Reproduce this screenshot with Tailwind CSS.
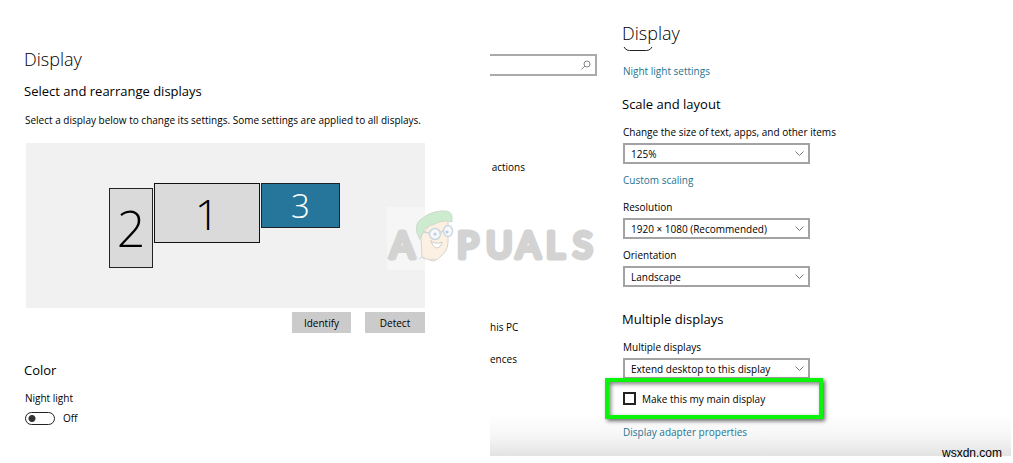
<!DOCTYPE html>
<html lang="en">
<head>
  <meta charset="UTF-8" />
  <meta name="viewport" content="width=device-width, initial-scale=1.0"/>
  <title>Display settings</title>
  <script src="https://cdn.jsdelivr.net/npm/@tailwindcss/browser@4"></script>
</head>
<body class="relative min-h-screen bg-white text-black text-[10px] leading-4 font-['Open_Sans','Noto_Sans',sans-serif]">

  <div class="grid grid-cols-[490fr_523fr]">

    <!-- Left: arrangement -->
    <main class="relative pl-6 pt-[45px]">
      <h1 class="text-[18px] leading-7 font-light">Display</h1>
      <h2 class="mt-2 text-[13px] leading-5">Select and rearrange displays</h2>
      <p class="mt-[11px] pl-px">Select a display below to change its settings. Some settings are applied to all displays.</p>

      <div class="ml-0.5 w-[399px]">
        <!-- Monitors -->
        <div class="relative mt-[15px] h-[165px] bg-[#f1f1f1] font-light">
          <button type="button" class="absolute left-[83px] top-[45px] w-11 h-20 border border-[#222] bg-[#dadada] text-[50px] leading-none">2</button>
          <button type="button" class="absolute left-32 top-10 w-[106px] h-[60px] border border-[#111] bg-[#dadada] text-[43px] leading-none">1</button>
          <button type="button" class="absolute left-[235px] top-10 w-[79px] h-[45px] border border-[#1b2328] bg-[#26769c] text-white text-[33px] leading-none">3</button>
        </div>

        <div class="mt-1 flex justify-end gap-[14px]">
          <button type="button" class="w-[59px] h-[21px] bg-[#cbcbcb]">Identify</button>
          <button type="button" class="w-[60px] h-[21px] bg-[#cbcbcb]">Detect</button>
        </div>
      </div>

      <h2 class="mt-[27px] text-[13px] leading-5">Color</h2>
      <label for="night" class="block mt-[10px] pl-px">Night light</label>
      <div class="mt-1 pl-px flex items-center gap-2">
        <input id="night" type="checkbox" role="switch"
               class="appearance-none w-[30px] h-[13px] rounded-full border border-[#222] bg-[radial-gradient(circle_at_6px_50%,#333_3px,transparent_4px)]" />
        <span>Off</span>
      </div>
    </main>

    <!-- Right: settings window -->
    <section class="mr-0.5 flex bg-[linear-gradient(to_top,#e3e3e3,#f6f6f6_20px,#fff_42px)]">

      <!-- Cropped sidebar -->
      <nav class="w-[107px] mr-[26px] pt-[54px] shrink-0">
        <div class="relative">
          <input type="text" aria-label="Find a setting" class="block w-full h-[22px] border-2 border-l-0 border-[#aaa] bg-white px-2" />
          <svg class="absolute right-1 top-1.5 w-3 h-3" viewBox="0 0 12 12" fill="none" stroke="#888" stroke-width="1">
            <circle cx="6" cy="4" r="3"/>
            <path d="M4 6 L0.500 9.500"/>
          </svg>
        </div>
        <a href="#" class="block mt-[83px] w-[35px] text-right">actions</a>
        <a href="#" class="block mt-36">his PC</a>
        <a href="#" class="block mt-4">ences</a>
      </nav>

      <!-- Options -->
      <div class="pt-[19px] pb-4 flex flex-col items-start">
        <h1 class="-ml-px text-[18px] leading-7 font-light">Display</h1>
        <div class="w-[30px] h-1 overflow-hidden flex items-end">
          <div class="w-full h-[13px] shrink-0 rounded-full border border-[#222]"></div>
        </div>
        <a href="#" class="mt-3 text-[#1f7391]">Night light settings</a>

        <h2 class="-ml-px mt-[15px] text-[13px] leading-5">Scale and layout</h2>
        <label for="scale" class="mt-[10px]">Change the size of text, apps, and other items</label>
        <div class="relative mt-[3px]">
          <select id="scale" class="block appearance-none w-[187px] h-[21px] border-2 border-[#a3a3a3] bg-white pl-1.5">
            <option>125%</option>
          </select>
          <svg class="absolute right-1.5 top-2 w-[9px] h-[5px] pointer-events-none" viewBox="0 0 9 5" fill="none" stroke="#777"><path d="M.5 .5 L4.500 4.500 L8.500 .5"/></svg>
        </div>
        <a href="#" class="mt-2 text-[#1f7391]">Custom scaling</a>

        <label for="resolution" class="mt-[11px]">Resolution</label>
        <div class="relative mt-[3px]">
          <select id="resolution" class="block appearance-none w-[187px] h-[21px] border-2 border-[#a3a3a3] bg-white pl-1.5">
            <option>1920 × 1080 (Recommended)</option>
          </select>
          <svg class="absolute right-1.5 top-2 w-[9px] h-[5px] pointer-events-none" viewBox="0 0 9 5" fill="none" stroke="#777"><path d="M.5 .5 L4.500 4.500 L8.500 .5"/></svg>
        </div>

        <label for="orientation" class="mt-2">Orientation</label>
        <div class="relative mt-[3px]">
          <select id="orientation" class="block appearance-none w-[187px] h-[21px] border-2 border-[#a3a3a3] bg-white pl-1.5">
            <option>Landscape</option>
          </select>
          <svg class="absolute right-1.5 top-2 w-[9px] h-[5px] pointer-events-none" viewBox="0 0 9 5" fill="none" stroke="#777"><path d="M.5 .5 L4.500 4.500 L8.500 .5"/></svg>
        </div>

        <h2 class="-ml-px mt-[22px] text-[13px] leading-5">Multiple displays</h2>
        <label for="multiple" class="mt-[10px]">Multiple displays</label>
        <div class="relative mt-[3px]">
          <select id="multiple" class="block appearance-none w-[187px] h-[21px] border-2 border-[#a3a3a3] bg-white pl-1.5">
            <option>Extend desktop to this display</option>
          </select>
          <svg class="absolute right-1.5 top-2 w-[9px] h-[5px] pointer-events-none" viewBox="0 0 9 5" fill="none" stroke="#777"><path d="M.5 .5 L4.500 4.500 L8.500 .5"/></svg>
        </div>

        <!-- Highlighted option -->
        <div class="relative -mt-px -ml-[18px] w-[218px] h-[41px] border-4 border-[#0bf50b] bg-white pl-[14px] flex items-center gap-1.5 shadow-[2px_2px_4px_rgba(0,0,0,0.6),inset_2px_2px_4px_rgba(0,0,0,0.5)]">
          <input id="main" type="checkbox" class="appearance-none w-[13px] h-[13px] border-2 border-[#222] bg-white" />
          <label for="main">Make this my main display</label>
        </div>
        <a href="#" class="mt-[5px] text-[#1f7391]">Display adapter properties</a>
      </div>
    </section>
  </div>

  <!-- Watermark -->
  <svg class="absolute left-[387px] top-[207px] w-[210px] h-[63px] pointer-events-none" viewBox="0 0 210 63" role="img" aria-label="Appuals">
    <rect width="210" height="63" fill="#fff" fill-opacity=".4"/>
    <g font-family="Lato, sans-serif" font-size="36" fill="#d3d3d3" stroke="#d3d3d3" stroke-width="5" stroke-linejoin="round">
      <text x="3 70 99 129 159 186" y="51">APUALS</text>
    </g>
    <g stroke-linejoin="round" stroke-linecap="round">
      <path d="M34 29 L35 50 L46 54 Q51 53 54 49 Q60 45 61 36 L61 13 L45 16 Z" fill="#fbf0e2" stroke="#d9d4cb"/>
      <path d="M30 26 Q28 17 33 13 Q42 5 54 4 Q65 3 65 10 L65 15 Q56 12 48 17 Q38 19 36 25 L33 32 Z" fill="#cdeccf" stroke="#cfd8cd"/>
      <g fill="#f6f9fc" stroke="#ccd6de" stroke-width="1.500">
        <circle cx="48" cy="27" r="5.500"/>
        <ellipse cx="61" cy="24" rx="4.500" ry="5.500"/>
        <path d="M42 26 L37 25 M53 26 L56 24" fill="none"/>
      </g>
      <circle cx="48" cy="27" r="1.500" fill="#b9cbe0"/>
      <circle cx="60" cy="25" r="1.500" fill="#b9cbe0"/>
      <path d="M44 34 Q49 38 55 35 Q54 41 49 41 Q45 39 44 34 Z" fill="#fff" stroke="#d0cbc5"/>
      <path d="M32 52 L35 50 L38 53 M42 53 L46 52 L49 53" fill="none" stroke="#dcdcdc"/>
    </g>
  </svg>

  <footer class="absolute right-[11px] bottom-0.5 text-[12px] leading-4 font-['Liberation_Sans',sans-serif]">wsxdn.com</footer>
</body>
</html>
